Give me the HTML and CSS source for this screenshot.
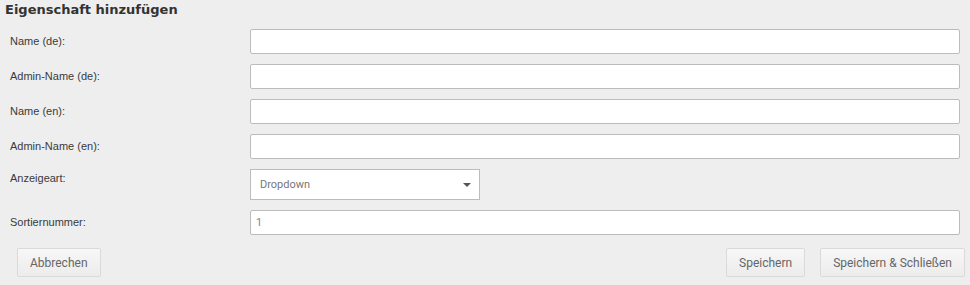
FILE: index.html
```html
<!DOCTYPE html>
<html lang="de">
<head>
<meta charset="utf-8">
<title>Eigenschaft hinzufügen</title>
<link rel="stylesheet" href="styles.css">
</head>
<body>
<div class="panel">
  <h1 class="title">Eigenschaft hinzufügen</h1>
  <form class="form">
    <div class="row">
      <label class="label">Name (de):</label>
      <input class="field" type="text">
    </div>
    <div class="row">
      <label class="label">Admin-Name (de):</label>
      <input class="field" type="text">
    </div>
    <div class="row">
      <label class="label">Name (en):</label>
      <input class="field" type="text">
    </div>
    <div class="row">
      <label class="label">Admin-Name (en):</label>
      <input class="field" type="text">
    </div>
    <div class="row">
      <label class="label label-top">Anzeigeart:</label>
      <div class="select">
        <span class="select-value">Dropdown</span>
        <span class="select-arrow"></span>
      </div>
    </div>
    <div class="row">
      <label class="label">Sortiernummer:</label>
      <input class="field field-num" type="text" value="1">
    </div>
    <div class="actions">
      <button type="button" class="btn">Abbrechen</button>
      <div class="actions-right">
        <button type="button" class="btn">Speichern</button>
        <button type="button" class="btn">Speichern &amp; Schließen</button>
      </div>
    </div>
  </form>
</div>
</body>
</html>
```

FILE: styles.css
```css
html, body {
  margin: 0;
  padding: 0;
  background: #eeeeee;
}

.panel {
  width: 970px;
  height: 285px;
  box-sizing: border-box;
  padding: 2px 0 0 0;
}

.title {
  margin: 0 0 0 5px;
  font-family: "DejaVu Sans", sans-serif;
  font-weight: bold;
  font-size: 13px;
  line-height: 16px;
  color: #333;
}

.form {
  display: flex;
  flex-direction: column;
  gap: 10px;
  margin-top: 11px;
}

.row {
  display: grid;
  grid-template-columns: 240px 1fr;
  align-items: start;
  padding-left: 10px;
  padding-right: 10px;
}

.label {
  font-family: "Liberation Sans", Arial, sans-serif;
  font-size: 11px;
  line-height: 18px;
  padding-top: 3px;
  color: #3a3a3a;
}

.label-top {
  padding-top: 0;
}

.field {
  box-sizing: border-box;
  width: 710px;
  height: 25px;
  margin: 0;
  border: 1px solid #bcbcbc;
  border-radius: 2px;
  background: #fff;
  padding: 0 5px;
  font-family: Roboto, sans-serif;
  font-size: 11px;
  color: #888;
  outline: none;
}

.select {
  box-sizing: border-box;
  width: 230px;
  height: 31px;
  border: 1px solid #bcbcbc;
  background: #fff;
  display: flex;
  align-items: center;
  justify-content: space-between;
  padding: 0 8px 0 9px;
}

.select-value {
  font-family: Roboto, sans-serif;
  font-size: 11px;
  color: #777;
}

.select-arrow {
  width: 0;
  height: 0;
  border-left: 4px solid transparent;
  border-right: 4px solid transparent;
  border-top: 4px solid #555;
}

.actions {
  display: flex;
  justify-content: space-between;
  padding: 3px 5px 0 17px;
}

.actions-right {
  display: flex;
  gap: 15px;
}

.btn {
  box-sizing: border-box;
  height: 29px;
  padding: 0 12px;
  margin: 0;
  border: 1px solid #dadada;
  border-radius: 2px;
  background: linear-gradient(#f7f7f7, #ececec);
  font-family: Roboto, sans-serif;
  font-size: 12px;
  color: #666;
}
```
